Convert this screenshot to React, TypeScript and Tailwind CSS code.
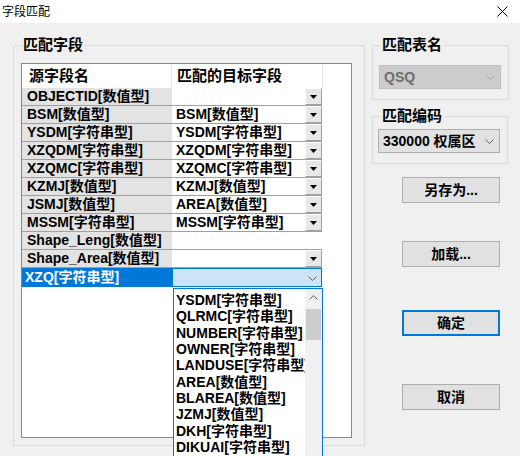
import React from 'react'

const FONT = "font-['Liberation_Sans','Noto_Sans_CJK_SC',sans-serif]"

const rows: { src: string; dst: string; btn: boolean }[] = [
  { src: 'OBJECTID[数值型]', dst: '', btn: true },
  { src: 'BSM[数值型]', dst: 'BSM[数值型]', btn: true },
  { src: 'YSDM[字符串型]', dst: 'YSDM[字符串型]', btn: true },
  { src: 'XZQDM[字符串型]', dst: 'XZQDM[字符串型]', btn: true },
  { src: 'XZQMC[字符串型]', dst: 'XZQMC[字符串型]', btn: true },
  { src: 'KZMJ[数值型]', dst: 'KZMJ[数值型]', btn: true },
  { src: 'JSMJ[数值型]', dst: 'AREA[数值型]', btn: true },
  { src: 'MSSM[字符串型]', dst: 'MSSM[字符串型]', btn: true },
  { src: 'Shape_Leng[数值型]', dst: '', btn: false },
  { src: 'Shape_Area[数值型]', dst: '', btn: true },
]

const options = [
  'YSDM[字符串型]',
  'QLRMC[字符串型]',
  'NUMBER[字符串型]',
  'OWNER[字符串型]',
  'LANDUSE[字符串型]',
  'AREA[数值型]',
  'BLAREA[数值型]',
  'JZMJ[数值型]',
  'DKH[字符串型]',
  'DIKUAI[字符串型]',
  'XZQDM[字符串型]',
]

function Chevron({ className = '' }: { className?: string }) {
  return (
    <svg width="9" height="5" viewBox="0 0 9 5" className={className}>
      <path d="M0.5 0.5 L4.5 4.5 L8.5 0.5" fill="none" stroke="currentColor" strokeWidth="1" />
    </svg>
  )
}

function DropBtn() {
  return (
    <div className="flex h-full w-[17px] items-center justify-center border border-[#a0a0a0] border-t-white border-l-white bg-[#e8e8e8]">
      <svg width="7" height="4" viewBox="0 0 7 4">
        <path d="M0 0 H7 L3.5 4 Z" fill="#000" />
      </svg>
    </div>
  )
}

function Group({ title, className = '', children }: { title: string; className?: string; children?: React.ReactNode }) {
  return (
    <div className={`relative border border-[#dcdcdc] ${className}`}>
      <span className="absolute left-[8px] top-[-10px] bg-[#f0f0f0] px-[1px] text-[15px] font-bold leading-[18px] text-black">
        {title}
      </span>
      {children}
    </div>
  )
}

function Button({ label, primary = false }: { label: string; primary?: boolean }) {
  return (
    <div
      className={`flex h-[26px] w-[98px] items-center justify-center bg-[#e1e1e1] text-[14px] font-bold text-black ${
        primary ? 'border-2 border-[#0078d7]' : 'border border-[#adadad]'
      }`}
    >
      {label}
    </div>
  )
}

export default function App() {
  return (
    <div className={`relative h-[456px] w-[520px] overflow-hidden bg-[#f0f0f0] ${FONT}`}>
      <div className="flex h-[23px] items-center justify-between bg-white pl-[2px] pr-[12px]">
        <span className="text-[12px] text-black">字段匹配</span>
        <svg width="11" height="11" viewBox="0 0 11 11">
          <path d="M0.5 0.5 L10.5 10.5 M10.5 0.5 L0.5 10.5" stroke="#000" strokeWidth="1" />
        </svg>
      </div>

      <div className="flex pt-[22px]">
        <Group title="匹配字段" className="ml-[13px] h-[401px] w-[352px]">
          <div className="ml-[7px] mt-[17px] h-[375px] w-[331px] border border-[#828790] bg-white">
            <div className="relative">
              <div className="flex h-[24px] text-[15px] font-bold">
                <div className="flex w-[150px] items-center border-r border-[#e5e5e5] pl-[7px]">源字段名</div>
                <div className="flex w-[151px] items-center border-r border-[#e5e5e5] pl-[5px]">匹配的目标字段</div>
              </div>
              {rows.map((r) => (
                <div key={r.src} className="flex h-[18px] w-[300px] border-b border-[#a0a0a0] text-[14px] font-bold leading-[17px]">
                  <div className="w-[150px] truncate bg-[#e3e3e3] pl-[5px]">{r.src}</div>
                  <div className="flex w-[150px] border-l border-white bg-white">
                    <div className="flex-1 pl-[3px]">{r.dst}</div>
                    {r.btn && <DropBtn />}
                  </div>
                </div>
              ))}
              <div className="flex h-[19px] w-[300px] text-[14px] font-bold leading-[18px]">
                <div className="w-[150px] bg-[#0078d7] pl-[3px] text-white">XZQ[字符串型]</div>
                <div className="flex w-[150px] items-center justify-end border border-[#0078d7] bg-[#cce4f7] pr-[4px] text-[#606060]">
                  <Chevron className="mt-[2px]" />
                </div>
              </div>

              <div className="absolute left-[151px] top-[224px] h-[190px] w-[150px] border border-[#0078d7] bg-white">
                <div className="flex">
                  <div className="flex-1 overflow-hidden pt-[3px] text-[14px] font-bold leading-[16.33px] text-black">
                    {options.map((o) => (
                      <div key={o} className="whitespace-nowrap pl-[2px]">
                        {o}
                      </div>
                    ))}
                  </div>
                  <div className="flex h-[188px] w-[17px] flex-col bg-[#f0f0f0]">
                    <div className="flex h-[17px] items-center justify-center text-[#606060]">
                      <Chevron className="rotate-180" />
                    </div>
                    <div className="mx-[1px] mt-[3px] h-[31px] bg-[#cdcdcd]" />
                  </div>
                </div>
              </div>
            </div>
          </div>
        </Group>

        <div className="ml-[7px] flex w-[137px] flex-col">
          <Group title="匹配表名" className="h-[55px] w-[137px]">
            <div className="ml-[6px] mt-[19px] flex h-[24px] w-[122px] items-center justify-between border border-[#bfbfbf] bg-[#cccccc] pl-[4px] pr-[5px] text-[14px] font-bold text-[#6d6d6d]">
              <span>QSQ</span>
              <Chevron className="text-[#a8a8a8]" />
            </div>
          </Group>
          <Group title="匹配编码" className="mt-[16px] h-[48px] w-[136px]">
            <div className="ml-[5px] mt-[12px] flex h-[24px] w-[122px] items-center justify-between border border-[#adadad] bg-[#e1e1e1] pl-[4px] pr-[5px] text-[14px] font-bold text-black">
              <span>330000 权属区</span>
              <Chevron className="text-[#606060]" />
            </div>
          </Group>
          <div className="ml-[30px] mt-[13px] flex flex-col">
            <Button label="另存为..." />
            <div className="h-[38px]" />
            <Button label="加载..." />
            <div className="h-[43px]" />
            <Button label="确定" primary />
            <div className="h-[48px]" />
            <Button label="取消" />
          </div>
        </div>
      </div>
    </div>
  )
}
